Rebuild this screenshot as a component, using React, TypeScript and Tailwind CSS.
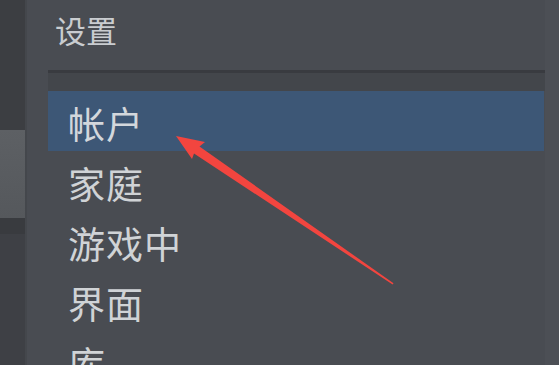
import React from "react";

const items = ["帐户", "家庭", "游戏中", "界面", "库"];

export default function App() {
  return (
    <div
      className="w-[559px] h-[365px] overflow-hidden flex bg-[#494c52] relative"
      style={{ fontFamily: '"Noto Sans CJK SC", "Noto Sans", sans-serif' }}
    >
      <div className="w-[25px] h-full flex flex-col shrink-0">
        <div className="h-[130px] shrink-0 bg-[#3c3e42]" />
        <div className="h-[88px] shrink-0 bg-gradient-to-b from-[#5d6064] to-[#55585c]" />
        <div className="h-[16px] shrink-0 bg-[#393b3f]" />
        <div className="flex-1 bg-[#3e4045]" />
      </div>
      <div className="w-[2px] h-full bg-[#44474c] shrink-0" />
      <div className="flex-1 flex flex-col pl-[21px] overflow-hidden">
        <div className="h-[70px] shrink-0 pl-[7px] pt-[8px] text-[31px] leading-[44px] text-[#c9ccd0]">
          设置
        </div>
        <div className="w-[498px] h-[21px] shrink-0 border-t-[3px] border-[#393b40] bg-[#43464b]" />
        <div className="flex flex-col w-[496px] shrink-0">
          {items.map((t, i) => (
            <div
              key={t}
              className={
                i === 0
                  ? "h-[60px] shrink-0 pl-[20px] flex items-center bg-[#3d5776] text-[37px] text-[#d3d7dc] tracking-[1px]"
                  : "h-[60px] shrink-0 pl-[20px] flex items-center text-[37px] text-[#d0d3d6] tracking-[1px]"
              }
            >
              <span className="leading-none mt-[4px]">{t}</span>
            </div>
          ))}
        </div>
      </div>
      <div className="w-[14px] h-full bg-[#4c4f55] shrink-0" />
      <svg
        className="absolute left-0 top-0 pointer-events-none"
        width="559"
        height="365"
        viewBox="0 0 559 365"
      >
        <polygon
          points="176,136 205,142 199.5,146.5 393.5,283.3 392.6,284.5 194,153.5 192,159"
          fill="#f2453f"
        />
      </svg>
    </div>
  );
}
